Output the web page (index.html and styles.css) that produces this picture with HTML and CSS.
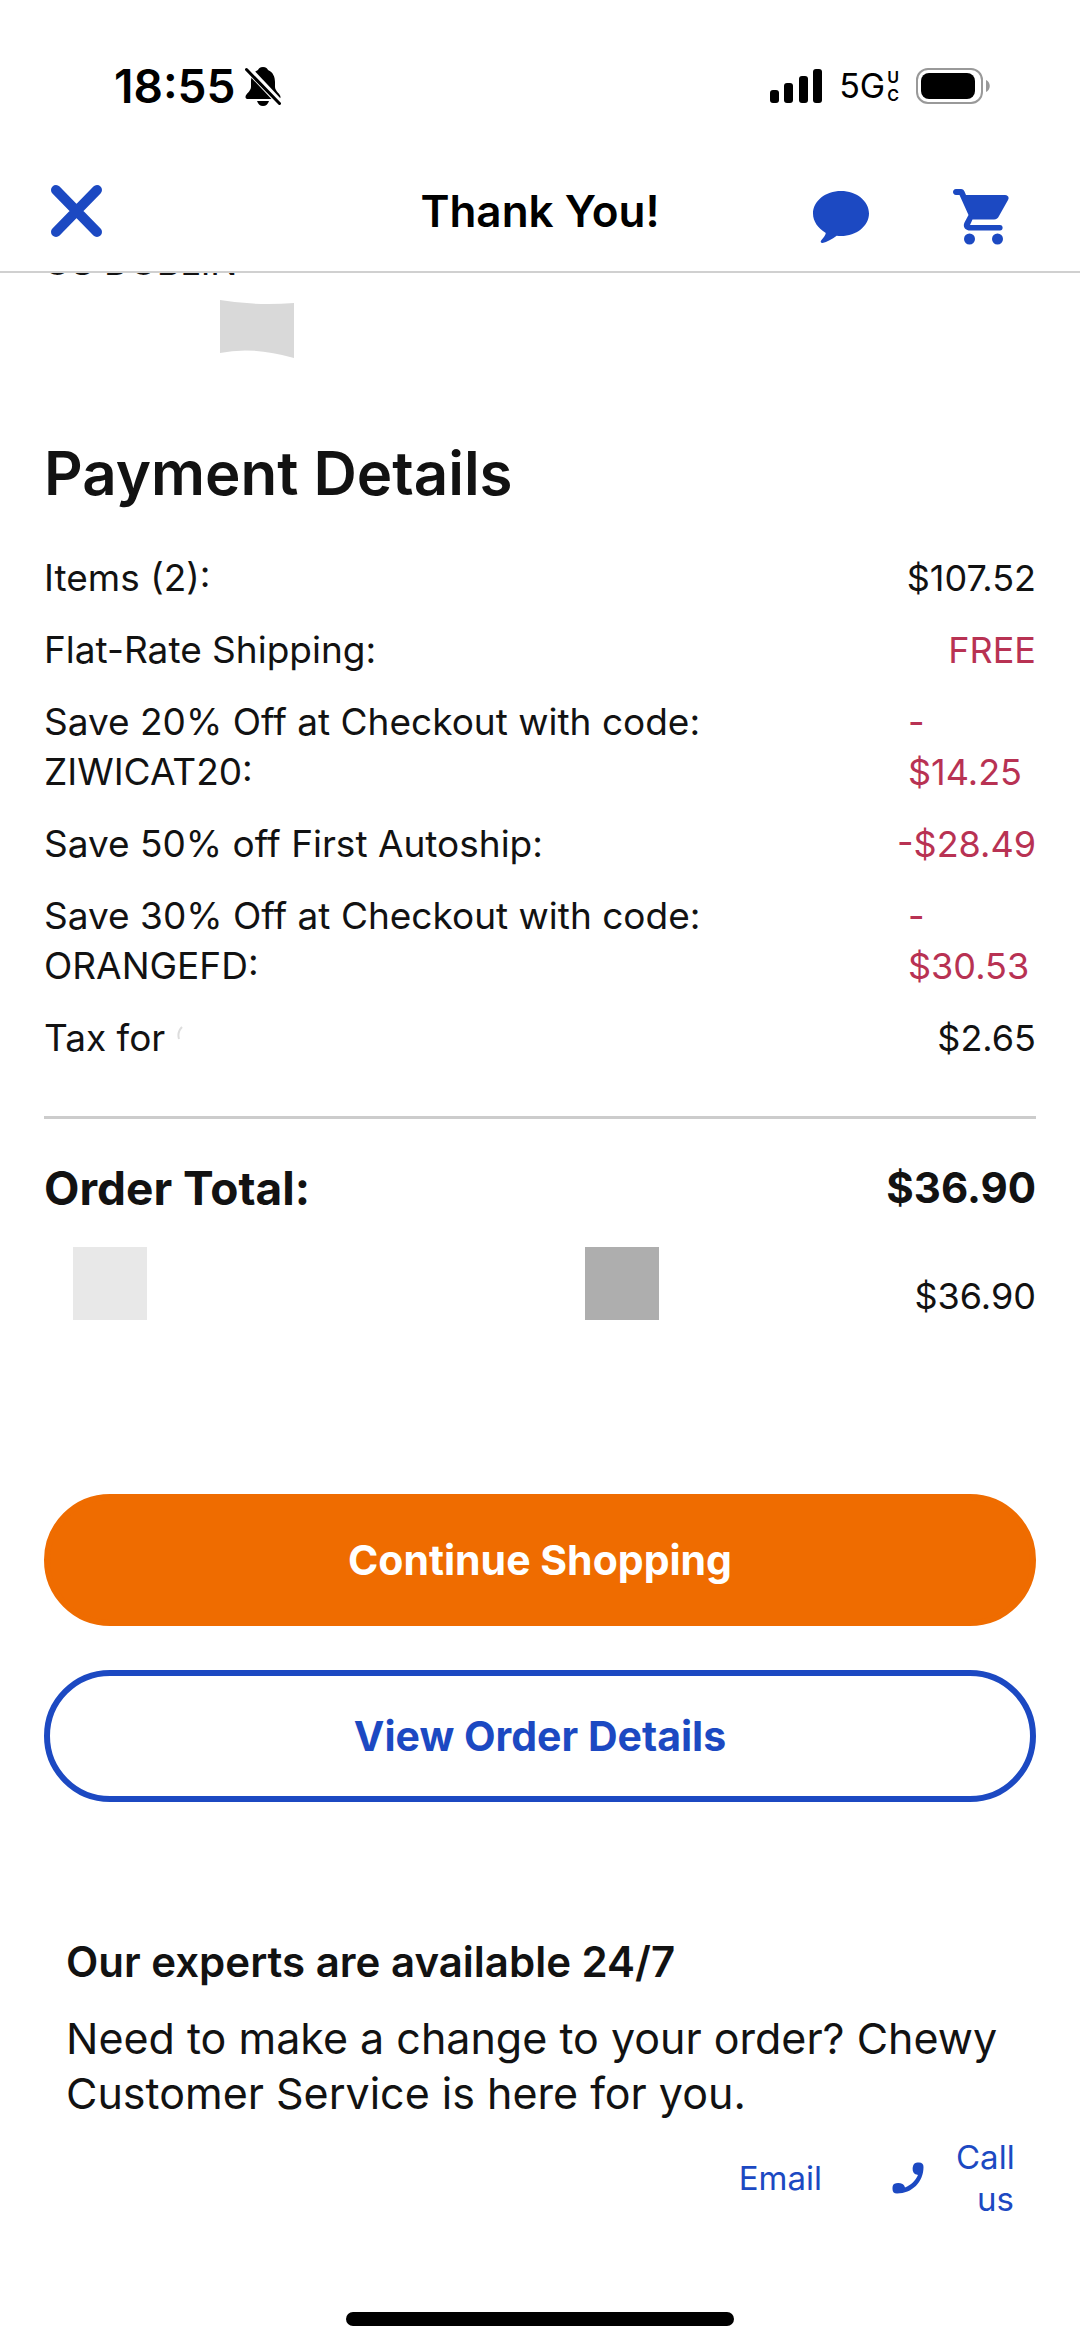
FILE: index.html
```html
<!DOCTYPE html>
<html lang="en">
  <head>
    <meta charset="UTF-8" />
    <meta name="viewport" content="width=device-width, initial-scale=1" />
    <title>Thank You!</title>
    <link rel="stylesheet" href="styles.css">
  </head>
  <body>
    <div class="status-bar">
      <div class="status-left">
        <span class="time">18:55</span>
        <svg viewBox="0 0 36 40" width="36" height="40" aria-hidden="true">
          <path d="M18 1c-3 0-4.500 1.500-5 3C8 6 6 11 6 16v5c0 4-5.500 7-5.500 10 0 1.500 1 2 2.500 2h30c1.500 0 2.500-.5 2.500-2 0-3-5.500-6-5.500-10v-5c0-5-2-10-7-12-.5-1.500-2-3-5-3z" />
          <path d="M12 35h12c-1 3-3 5-6 5s-5-2-6-5z" />
          <path d="M2 2l34 36" stroke="#fff" stroke-width="7" />
          <path d="M1.500 3.500l33 34" stroke="#000" stroke-width="3" stroke-linecap="round" />
        </svg>
      </div>
      <div class="status-right">
        <svg viewBox="0 0 52 34" width="52" height="34" aria-hidden="true">
          <rect x="0" y="21" width="9" height="13" rx="3" />
          <rect x="14" y="14" width="9" height="20" rx="3" />
          <rect x="29" y="7" width="9" height="27" rx="3" />
          <rect x="43" y="0" width="9" height="34" rx="3" />
        </svg>
        <span class="network">5G<span class="network-sub"><span>U</span><span>C</span></span></span>
        <svg viewBox="0 0 74 36" width="74" height="36" aria-hidden="true">
          <rect x="1" y="1" width="65" height="34" rx="11" fill="none" stroke="#999" stroke-width="2" />
          <rect x="5" y="5" width="54" height="26" rx="8" />
          <path d="M70 12c5 2 5 10 0 12z" fill="#999" />
        </svg>
      </div>
    </div>

    <header class="nav-bar">
      <button class="icon-btn" type="button" aria-label="Close">
        <svg viewBox="0 0 52 52" width="52" height="52">
          <path d="M6 5l41 42M47 5L6 47" fill="none" stroke="#1c49c2" stroke-width="10" stroke-linecap="round" />
        </svg>
      </button>
      <h1>Thank You!</h1>
      <div class="nav-actions">
        <button class="icon-btn" type="button" aria-label="Chat">
          <svg viewBox="0 0 56 56" width="56" height="56">
            <path d="M28 2c15.500 0 28 10 28 22.500S43.500 47 28 47c-1.500 0-3-.1-4.300-.3C19 50 14 53 9.500 54c-2 0-2.300-1.500-1-3 2-2.300 4-4.500 4.300-7C5 39 0 32.500 0 24.500 0 12 12.500 2 28 2z" fill="#1c49c2" />
          </svg>
        </button>
        <button class="icon-btn" type="button" aria-label="Cart">
          <svg viewBox="0 0 56 56" width="56" height="56">
            <path d="M3 0h5c2 0 2.800 1 3.500 2.500L13 6h39c3 0 4.500 2.500 3 5L46 27c-1 2.300-2.500 3.500-5 3.500H19.500L17 36h30c3.500 0 3.500 5.500 0 5.500H17c-5 0-7.500-4-5.500-8l4-7.500L6.500 6H3C-1 6-1 0 3 0z" fill="#1c49c2" />
            <circle cx="16.500" cy="50" r="5.500" fill="#1c49c2" />
            <circle cx="44.500" cy="50" r="5.500" fill="#1c49c2" />
          </svg>
        </button>
      </div>
    </header>

    <main>
      <div class="address">
        <p>US DUBLIN</p>
        <svg viewBox="0 0 74 60" width="74" height="60" aria-hidden="true">
          <path d="M0 1q35 6 74 3v55q-42-12-74-5z" fill="#d9d9d9" />
        </svg>
      </div>

      <section>
        <h2>Payment Details</h2>
        <dl class="summary">
          <div class="row">
            <dt>Items (2):</dt>
            <dd>$107.52</dd>
          </div>
          <div class="row">
            <dt>Flat-Rate Shipping:</dt>
            <dd class="discount">FREE</dd>
          </div>
          <div class="row">
            <dt>Save 20% Off at Checkout with code: ZIWICAT20:</dt>
            <dd class="discount wrapped">-<br>$14.25</dd>
          </div>
          <div class="row">
            <dt>Save 50% off First Autoship:</dt>
            <dd class="discount">-$28.49</dd>
          </div>
          <div class="row">
            <dt>Save 30% Off at Checkout with code: ORANGEFD:</dt>
            <dd class="discount wrapped">-<br>$30.53</dd>
          </div>
          <div class="row">
            <dt class="tax">
              Tax for
              <svg viewBox="0 0 6 24" width="6" height="24" aria-hidden="true">
                <path d="M5 1Q0 6 2 13" fill="none" stroke="#ddd" stroke-width="2" />
              </svg>
            </dt>
            <dd>$2.65</dd>
          </div>
        </dl>
        <div class="row total">
          <span class="total-label">Order Total:</span>
          <span>$36.90</span>
        </div>
        <div class="payment">
          <span class="block light"></span>
          <span class="block dark"></span>
          <span class="paid">$36.90</span>
        </div>
      </section>

      <div class="actions">
        <button class="btn primary" type="button">Continue Shopping</button>
        <button class="btn secondary" type="button">View Order Details</button>
      </div>

      <section class="help">
        <h3>Our experts are available 24/7</h3>
        <p>Need to make a change to your order? Chewy Customer Service is here for you.</p>
        <div class="contact">
          <a href="#email">Email</a>
          <a class="call" href="#call">
            <svg viewBox="0 0 32 32" width="32" height="32" aria-hidden="true">
              <path d="M22 2c1-1.500 3-1.500 5-1.500 3 0 4.500 1.500 4.500 4.500C31.500 20 20 31.500 5 31.500 2 31.500.5 30 .5 27c0-2 0-4 1.500-5 2.500-1.500 6-1.500 8.500 0 1.500 1 2 2 2.500 3.500 6-2.500 10.500-7 13-12.500-2-.5-3.500-1-4.500-2.500-1.500-2.500-1-6.500.5-8.500z" fill="#1c49c2" />
            </svg>
            <span>Call us</span>
          </a>
        </div>
      </section>
    </main>

    <div class="home-indicator"></div>
  </body>
</html>
```

FILE: styles.css
```css
* {
  box-sizing: border-box;
}
body {
  margin: 0;
  background-color: #fff;
  color: #121212;
  font-family: Inter, "Liberation Sans", sans-serif;
  font-size: 36px;
  line-height: 50px;
}
h1,
h2,
h3,
p,
dl,
dd {
  margin: 0;
}
button {
  font-family: inherit;
  cursor: pointer;
}
svg {
  display: block;
  flex-shrink: 0;
}

.status-bar {
  display: flex;
  justify-content: space-between;
  align-items: center;
  padding: 61px 90px 60px 114px;
  color: #000;
}
.status-left,
.status-right {
  display: flex;
  align-items: center;
}
.status-left {
  gap: 10px;
}
.status-right {
  gap: 17px;
}
.time {
  font-size: 46px;
  font-weight: 600;
}
.network {
  display: flex;
  align-items: center;
  gap: 2px;
  font-size: 34px;
}
.network-sub {
  display: flex;
  flex-direction: column;
  font-size: 16px;
  font-weight: 600;
  line-height: 18px;
}

.nav-bar {
  display: grid;
  grid-template-columns: 1fr auto 1fr;
  align-items: center;
  height: 102px;
  padding: 0 50px 20px;
  border-bottom: 2px solid #d0d0d0;
}
.nav-bar h1 {
  color: #000;
  font-size: 44px;
  font-weight: 600;
}
.nav-actions {
  display: flex;
  justify-content: flex-end;
  gap: 84px;
  padding: 12px 21px 0 0;
}
.icon-btn {
  justify-self: start;
  padding: 0;
  border: 0;
  background: none;
}

main {
  padding: 0 44px;
}
/* scrolled under the nav bar */
.address {
  display: flex;
  flex-direction: column;
  justify-content: flex-end;
  gap: 12px;
  height: 86px;
  overflow: hidden;
}
.address p {
  flex-shrink: 0;
}
.address svg {
  margin-left: 176px;
}

h2 {
  padding-top: 76px;
  font-size: 60px;
  font-weight: 600;
  line-height: 76px;
}
.summary {
  display: flex;
  flex-direction: column;
  gap: 22px;
  padding: 42px 0 53px;
  border-bottom: 3px solid #ccc;
}
.row {
  display: flex;
  justify-content: space-between;
}
.summary dt {
  max-width: 700px;
  font-size: 37px;
}
.tax {
  display: flex;
  align-items: center;
  gap: 12px;
}
.discount {
  color: #b83253;
}
.wrapped {
  width: 128px;
}
.total {
  padding-top: 44px;
  font-size: 42px;
  font-weight: 700;
}
.total-label {
  font-size: 46px;
}
.payment {
  display: flex;
  padding: 34px 0 0 29px;
}
.block {
  width: 74px;
  height: 73px;
}
.light {
  background-color: #e8e8e8;
}
.dark {
  margin-left: 438px;
  background-color: #aeaeae;
}
.paid {
  margin: 24px 0 0 auto;
}

.actions {
  display: flex;
  flex-direction: column;
  gap: 44px;
  padding-top: 173px;
}
.btn {
  height: 132px;
  border: 6px solid #1c49c2;
  border-radius: 66px;
  font-size: 41px;
  font-weight: 700;
}
.primary {
  border-color: #ef6c00;
  background-color: #ef6c00;
  color: #fff;
}
.secondary {
  background-color: #fff;
  color: #1c49c2;
}

.help {
  padding: 132px 22px 0;
}
.help h3 {
  font-size: 42px;
  font-weight: 600;
  line-height: 55px;
}
.help p {
  padding-top: 22px;
  font-size: 43px;
  line-height: 55px;
}
.contact {
  display: flex;
  justify-content: flex-end;
  align-items: center;
  gap: 70px;
  padding-top: 15px;
  font-size: 33px;
  line-height: 42px;
  text-align: right;
}
.contact a {
  color: #1c49c2;
  text-decoration: none;
}
.call {
  display: flex;
  align-items: center;
  gap: 32px;
}
.call span {
  width: 58px;
}

.home-indicator {
  width: 388px;
  height: 14px;
  margin: 92px auto 22px;
  border-radius: 7px;
  background-color: #000;
}
```
